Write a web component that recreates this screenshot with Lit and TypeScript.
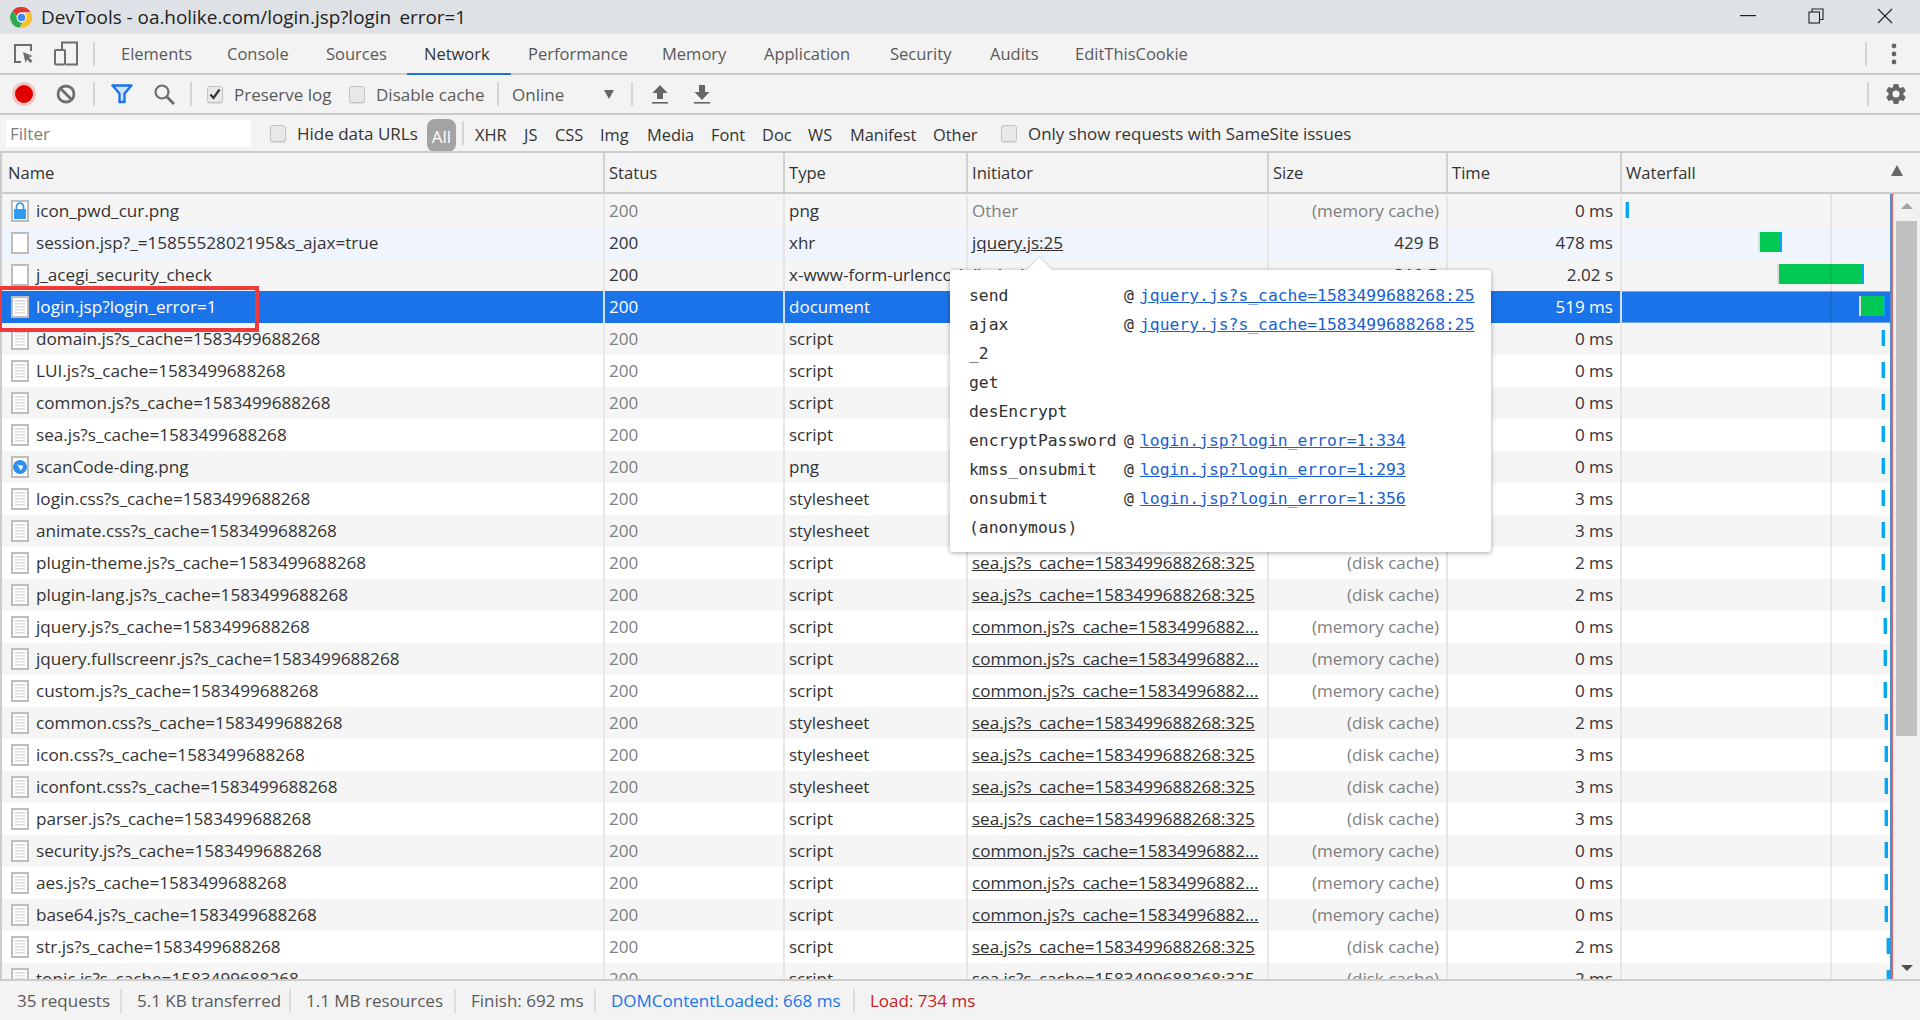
import { LitElement, html, css, svg } from "lit";
import { customElement } from "lit/decorators.js";

type Row = { n: string; i: string; t: string; ini: string; sz: string; tm: string; };
const S = "1583499688268";
const SEA = `sea.js?s_cache=${S}:325`;
const COM = "common.js?s_cache=15834996882...";
const D = "(disk cache)", M = "(memory cache)";
const rows: Row[] = [
  { n: "icon_pwd_cur.png", i: "lock", t: "png", ini: "Other", sz: M, tm: "0 ms" },
  { n: "session.jsp?_=1585552802195&s_ajax=true", i: "blank", t: "xhr", ini: "jquery.js:25", sz: "429 B", tm: "478 ms" },
  { n: "j_acegi_security_check", i: "blank", t: "x-www-form-urlencoded", ini: "(index)", sz: "310 B", tm: "2.02 s" },
  { n: "login.jsp?login_error=1", i: "doc", t: "document", ini: "login.jsp", sz: "3.2 KB", tm: "519 ms" },
  { n: `domain.js?s_cache=${S}`, i: "doc", t: "script", ini: "login.jsp", sz: M, tm: "0 ms" },
  { n: `LUI.js?s_cache=${S}`, i: "doc", t: "script", ini: "login.jsp", sz: M, tm: "0 ms" },
  { n: `common.js?s_cache=${S}`, i: "doc", t: "script", ini: "login.jsp", sz: M, tm: "0 ms" },
  { n: `sea.js?s_cache=${S}`, i: "doc", t: "script", ini: "login.jsp", sz: M, tm: "0 ms" },
  { n: "scanCode-ding.png", i: "ding", t: "png", ini: "login.jsp", sz: M, tm: "0 ms" },
  { n: `login.css?s_cache=${S}`, i: "doc", t: "stylesheet", ini: "login.jsp", sz: D, tm: "3 ms" },
  { n: `animate.css?s_cache=${S}`, i: "doc", t: "stylesheet", ini: "login.jsp", sz: D, tm: "3 ms" },
  { n: `plugin-theme.js?s_cache=${S}`, i: "doc", t: "script", ini: SEA, sz: D, tm: "2 ms" },
  { n: `plugin-lang.js?s_cache=${S}`, i: "doc", t: "script", ini: SEA, sz: D, tm: "2 ms" },
  { n: `jquery.js?s_cache=${S}`, i: "doc", t: "script", ini: COM, sz: M, tm: "0 ms" },
  { n: `jquery.fullscreenr.js?s_cache=${S}`, i: "doc", t: "script", ini: COM, sz: M, tm: "0 ms" },
  { n: `custom.js?s_cache=${S}`, i: "doc", t: "script", ini: COM, sz: M, tm: "0 ms" },
  { n: `common.css?s_cache=${S}`, i: "doc", t: "stylesheet", ini: SEA, sz: D, tm: "2 ms" },
  { n: `icon.css?s_cache=${S}`, i: "doc", t: "stylesheet", ini: SEA, sz: D, tm: "3 ms" },
  { n: `iconfont.css?s_cache=${S}`, i: "doc", t: "stylesheet", ini: SEA, sz: D, tm: "3 ms" },
  { n: `parser.js?s_cache=${S}`, i: "doc", t: "script", ini: SEA, sz: D, tm: "3 ms" },
  { n: `security.js?s_cache=${S}`, i: "doc", t: "script", ini: COM, sz: M, tm: "0 ms" },
  { n: `aes.js?s_cache=${S}`, i: "doc", t: "script", ini: COM, sz: M, tm: "0 ms" },
  { n: `base64.js?s_cache=${S}`, i: "doc", t: "script", ini: COM, sz: M, tm: "0 ms" },
  { n: `str.js?s_cache=${S}`, i: "doc", t: "script", ini: SEA, sz: D, tm: "2 ms" },
  { n: `topic.js?s_cache=${S}`, i: "doc", t: "script", ini: SEA, sz: D, tm: "2 ms" },
];

const tickX = (i: number) => {
  if (i === 0) return 4;
  if (i >= 4 && i <= 12) return 260;
  if (i >= 13 && i <= 15) return 262;
  if (i >= 16 && i <= 22) return 263;
  return 265;
};
const bars: Record<number, [number, number]> = { 1: [138, 20], 2: [157, 83], 3: [239, 22] };

const stack = [
  ["send", `jquery.js?s_cache=${S}:25`],
  ["ajax", `jquery.js?s_cache=${S}:25`],
  ["_2", ""], ["get", ""], ["desEncrypt", ""],
  ["encryptPassword", "login.jsp?login_error=1:334"],
  ["kmss_onsubmit", "login.jsp?login_error=1:293"],
  ["onsubmit", "login.jsp?login_error=1:356"],
  ["(anonymous)", ""],
];

const tabs = ["Elements", "Console", "Sources", "Network", "Performance", "Memory", "Application", "Security", "Audits", "EditThisCookie"];
const types = ["XHR", "JS", "CSS", "Img", "Media", "Font", "Doc", "WS", "Manifest", "Other"];

const fileIcon = (k: string) => svg`<svg class="ficon" width="18" height="22" viewBox="0 0 18 22">
  <rect x="1" y="1" width="16" height="20" fill="#fff" stroke="#bdbdbd" stroke-width="2"/>
  ${k === "doc" ? svg`<g fill="#dcdcdc"><rect x="4" y="4" width="10" height="1.6"/><rect x="4" y="7" width="6" height="1.6"/><rect x="11" y="7" width="3" height="1.6"/><rect x="4" y="10" width="10" height="1.6"/><rect x="4" y="13" width="4" height="1.6"/><rect x="9" y="13" width="5" height="1.6"/><rect x="4" y="16" width="10" height="1.6"/></g>` : ""}
  ${k === "lock" ? svg`<path d="M5.5 9V6.6a3.5 3.5 0 0 1 7 0V9" fill="none" stroke="#2f9bf0" stroke-width="1.7"/><rect x="3" y="9" width="12" height="10" rx="1" fill="#2f9bf0"/>` : ""}
  ${k === "ding" ? svg`<circle cx="9" cy="11" r="7" fill="#2b8ff0"/><path d="M5.5 8.5l7 1.5-1.5 2 .8 0-3 3 .7-2.5-2-.5.6-1.3z" fill="#fff"/>` : ""}
</svg>`;

@customElement("app-root")
export class AppRoot extends LitElement {
  static styles = css`
    :host { display: flex; flex-direction: column; position: relative; width: 1920px; height: 1020px; overflow: hidden; background: #f3f3f3; font-family: "Open Sans", "Noto Sans", sans-serif; font-size: 17px; color: #333; }
    svg { display: block; }
    .title { height: 34px; background: #dee1e6; display: flex; align-items: center; padding-left: 10px; flex: none; position: relative; }
    .title .t { margin-left: 8px; font-size: 18.9px; color: #222; white-space: nowrap; }
    .hid { color: transparent; }
    .winbtns { margin-left: auto; display: grid; grid-template-columns: 16px 68px 69px; align-items: center; padding: 0 27px 3px 0; justify-items: end; }
    .tabs { height: 39px; flex: none; border-bottom: 2px solid #ccc; display: grid; grid-template-columns: 48px 36px 20px 106px 99px 98px 104px 134px 102px 126px 100px 85px 140px 1fr 20px 36px 8px; align-items: center; box-sizing: content-box; }
    .tab { height: 39px; line-height: 40px; padding-left: 17px; color: #5a5a5a; white-space: nowrap; position: relative; box-sizing: border-box; font-size: 16.5px; }
    .tab.on { color: #333; }
    .tab.on::after { content: ""; position: absolute; left: 0; right: 0; bottom: -2px; height: 2px; background: #1a73e8; }
    .ic { justify-self: center; }
    .sep { width: 2px; height: 24px; background: #d4d4d4; justify-self: center; }
    .tools { height: 38px; flex: none; border-bottom: 2px solid #ccc; display: grid; grid-template-columns: 48px 36px 20px 36px 48px 6px 142px 156px 12px 118px 20px 36px 6px 36px 1fr 20px 36px 6px; align-items: center; }
    .chk { display: flex; align-items: center; padding-left: 13px; color: #5a5a5a; white-space: nowrap; }
    .box { width: 16px; height: 17px; box-sizing: border-box; border: 1px solid #c2c2c2; border-radius: 3px; background: #e8e8e8; margin-right: 11px; flex: none; display: flex; align-items: center; justify-content: center; box-shadow: 0 1px 1px #ddd; }
    .sel { display: flex; align-items: center; justify-content: space-between; padding: 0 8px; color: #5a5a5a; }
    .caret { width: 0; height: 0; border-left: 5px solid transparent; border-right: 5px solid transparent; border-top: 9px solid #666; }
    .filters { height: 36px; flex: none; display: grid; grid-template-columns: 6px 245px 176px 29px 14px 49px 31px 45px 47px 64px 51px 46px 42px 83px 68px 1fr; align-items: center; }
    .input { grid-column: 2; height: 27px; background: #fff; color: #808080; padding-left: 4px; line-height: 28px; box-sizing: border-box; }
    .filters .chk { padding-left: 19px; color: #333; }
    .filters .only { padding-left: 5px; font-size: 16.9px; }
    .all { height: 33px; border-radius: 8px; background: #a3a3a3; color: #fff; text-align: center; line-height: 35px; align-self: end; margin-bottom: -1px; }
    .ty { padding-left: 5px; padding-top: 3px; color: #333; font-size: 16.4px; }
    .table { flex: 1; display: flex; flex-direction: column; min-height: 0; border-top: 2px solid #ccc; border-left: 2px solid #ccc; }
    .head, .row { display: grid; grid-template-columns: 601px 180px 183px 301px 179px 174px 273px; }
    .head { height: 39px; border-bottom: 2px solid #ccc; flex: none; position: relative; font-size: 16.6px; }
    .head .c { border-left: 2px solid #d0d0d0; padding-left: 4px; line-height: 39px; }
    .head .c:first-child { border-left: 0; padding-left: 6px; }
    .sort { position: absolute; left: 1889px; top: 12px; width: 0; height: 0; border-left: 6px solid transparent; border-right: 6px solid transparent; border-bottom: 11px solid #666; }
    .body { flex: 1; min-height: 0; display: flex; position: relative; overflow: hidden; padding-top: 1px; }
    .list { width: 1891px; flex: none; }
    .row { height: 32px; background: #fff; line-height: 31px; white-space: nowrap; font-size: 17.05px; }
    .row.odd { background: #f5f5f5; }
    .row.hov { background: #f0f5fd; }
    .row .c { border-left: 2px solid #e6e6e6; padding-left: 4px; overflow: hidden; box-sizing: border-box; }
    .row .c:first-child { border-left: 0; padding-left: 9px; display: flex; align-items: center; font-size: 17.15px; }
    .name { margin-top: -2px; }
    .ficon { margin-right: 7px; flex: none; }
    .dim { color: #808080; }
    .link { text-decoration: underline; color: #303030; }
    .r { text-align: right; padding-right: 7px; }
    .row.sel2 { background: #1a73e8; color: #fff; }
    .row.sel2 .c { border-left-color: #cfe0f8; }
    .row.sel2 .c:first-child { color: #fff; }
    .row.sel2 .dim { color: #fff; }
    .row.sel2 .wf { box-shadow: inset 0 1px 0 #6ea6f0, inset 0 -1px 0 #6ea6f0; }
    .wf { position: relative; }
    .tick { position: absolute; top: 7px; width: 3px; height: 16px; background: #03a9f4; box-shadow: -1px 0 0 #8fd8fa; }
    .bar { position: absolute; top: 5px; height: 20px; background: #00c853; box-shadow: 2px 0 0 #03a9f4, -2px 0 0 #ddd; }
    .grid-line { position: absolute; top: 0; bottom: 0; left: 1828px; width: 2px; background: rgba(0, 0, 0, 0.07); }
    .dom-line { position: absolute; top: 0; bottom: 0; left: 1888px; width: 2px; background: #4a90d9; }
    .load-line { position: absolute; top: 0; bottom: 0; left: 1890px; width: 1.5px; background: #e06666; }
    .scroll { width: 27px; flex: none; background: #f1f1f1; position: relative; }
    .up { position: absolute; left: 8px; top: 8px; width: 0; height: 0; border-left: 6px solid transparent; border-right: 6px solid transparent; border-bottom: 6px solid #a3a3a3; }
    .thumb { position: absolute; left: 3px; top: 26px; width: 21px; height: 515px; background: #c1c1c1; }
    .down { position: absolute; right: 7px; bottom: 8px; width: 0; height: 0; border-left: 6px solid transparent; border-right: 6px solid transparent; border-top: 6px solid #505050; }
    .foot { height: 39px; flex: none; border-top: 2px solid #ccc; display: grid; grid-template-columns: 122px 169px 165px 140px 259px 1fr; align-items: center; color: #5a5a5a; }
    .foot div { padding-left: 15px; height: 24px; line-height: 24px; border-right: 2px solid #ddd; white-space: nowrap; }
    .foot div:first-child { padding-left: 17px; }
    .foot div:last-child { border-right: 0; }
    .foot .blue { color: #1a73e8; }
    .foot .red { color: #c5221f; }
    .pop { position: absolute; left: 950px; top: 270px; width: 541px; height: 282px; box-sizing: border-box; background: #fff; border-radius: 3px; box-shadow: 0 1px 5px rgba(0, 0, 0, 0.35); padding: 11px 0 0 19px; display: grid; grid-template-columns: 155px 16px 1fr; grid-auto-rows: 29px; align-items: center; font-family: "DejaVu Sans Mono", "Liberation Mono", monospace; font-size: 16.35px; color: #303030; }
    .pop::before { content: ""; position: absolute; left: 81px; top: -9px; width: 17px; height: 17px; background: #fff; transform: rotate(45deg); box-shadow: -1px -1px 2px rgba(0, 0, 0, 0.12); }
    .pop span { position: relative; white-space: nowrap; }
    .pop a { color: #1a5fd0; text-decoration: underline; }
    .mark { position: absolute; left: 0; top: 286px; width: 259px; height: 46px; box-sizing: border-box; border: 4px solid #f33a3a; border-left-width: 2px; pointer-events: none; }
  `;

  render() {
    return html`
      <div class="title">
        <svg width="23" height="23" viewBox="0 0 24 24">
          <path d="M12 1a11 11 0 0 1 9.6 5.6H12a5.4 5.4 0 0 0-5.2 4L3 4.6A11 11 0 0 1 12 1z" fill="#e0392b"/>
          <path d="M3 4.6l4 6.9a5.4 5.4 0 0 0 6.6 5.8L9.800 22.800A11 11 0 0 1 3 4.600z" fill="#2fa84f"/>
          <path d="M21.600 6.600A11 11 0 0 1 10 22.800l4.200-6.800A5.400 5.400 0 0 0 15.800 8z" fill="#fbc02d"/>
          <circle cx="12" cy="12" r="5" fill="#fff"/><circle cx="12" cy="12" r="4" fill="#4285f4"/>
        </svg>
        <span class="t">DevTools - oa.holike.com/login.jsp?login<span class="hid">_</span>error=1</span>
        <div class="winbtns">
          <svg width="16" height="2" viewBox="0 0 16 2"><rect width="16" height="1.2" fill="#222"/></svg>
          <svg width="16" height="16" viewBox="0 0 16 16" fill="none" stroke="#222" stroke-width="1.1"><rect x="1" y="4" width="10.500" height="11"/><path d="M4 4V1h11v10.500h-3.500"/></svg>
          <svg width="16" height="16" viewBox="0 0 16 16" stroke="#222" stroke-width="1.1"><path d="M1 1l14 14M15 1L1 15"/></svg>
        </div>
      </div>
      <div class="tabs">
        <svg class="ic" width="22" height="22" viewBox="0 0 22 22" fill="none" stroke="#6e6e6e" stroke-width="2"><path d="M8 19H2V2h16v6"/><path d="M10 9l9.500 4-3.500 1.500 3.500 3.500-2 2-3.500-3.500-1.500 3.500z" fill="#6e6e6e" stroke="none"/></svg>
        <svg class="ic" width="24" height="25" viewBox="0 0 24 25" fill="none" stroke="#6e6e6e" stroke-width="2"><path d="M8 8V1.500h15v22H12"/><rect x="1" y="9" width="10" height="14.500" rx="1"/></svg>
        <div class="sep"></div>
        ${tabs.map((t) => html`<div class="tab ${t === "Network" ? "on" : ""}">${t}</div>`)}
        <div></div>
        <div class="sep"></div>
        <svg class="ic" width="6" height="24" viewBox="0 0 6 24" fill="#666"><circle cx="3" cy="4" r="2.400"/><circle cx="3" cy="12" r="2.400"/><circle cx="3" cy="20" r="2.400"/></svg>
        <div></div>
      </div>
      <div class="tools">
        <svg class="ic" width="26" height="26" viewBox="0 0 26 26"><circle cx="13" cy="13" r="12" fill="#f5c6c6"/><circle cx="13" cy="13" r="9" fill="#e00000"/></svg>
        <svg class="ic" width="20" height="20" viewBox="0 0 20 20" fill="none" stroke="#6e6e6e" stroke-width="2.800"><circle cx="10" cy="10" r="8"/><path d="M4.500 4.500l11 11"/></svg>
        <div class="sep"></div>
        <svg class="ic" width="22" height="20" viewBox="0 0 22 20"><path d="M1.500 1.500h19l-7 8v8.500h-5V9.500z" fill="#cfe3fb" stroke="#1a73e8" stroke-width="2.400" stroke-linejoin="round"/></svg>
        <svg class="ic" width="21" height="21" viewBox="0 0 21 21" fill="none" stroke="#6e6e6e" stroke-width="2.200"><circle cx="8" cy="8" r="6.500"/><path d="M12.800 12.800L20 20" stroke-width="2.800"/></svg>
        <div class="sep"></div>
        <div class="chk"><span class="box"><svg width="12" height="12" viewBox="0 0 12 12" fill="none" stroke="#333" stroke-width="2.200"><path d="M1.500 6.500l3 3.500 6-8.500"/></svg></span>Preserve log</div>
        <div class="chk"><span class="box"></span>Disable cache</div>
        <div class="sep"></div>
        <div class="sel"><span>Online</span><span class="caret"></span></div>
        <div class="sep"></div>
        <svg class="ic" width="16" height="19" viewBox="0 0 16 19" fill="#666"><path d="M8 0l7.500 8H11v6H5V8H.5z"/><rect y="17" width="16" height="1.600"/></svg>
        <div></div>
        <svg class="ic" width="16" height="19" viewBox="0 0 16 19" fill="#666"><path d="M8 15L.5 7H5V0h6v7h4.500z"/><rect y="17" width="16" height="1.600"/></svg>
        <div></div>
        <div class="sep"></div>
        <svg class="ic" width="24" height="24" viewBox="0 0 24 24" fill="#666"><path d="M19.430 12.980c.04-.32.070-.64.070-.98s-.03-.66-.07-.98l2.110-1.650a.5.5 0 0 0 .12-.64l-2-3.460a.5.5 0 0 0-.61-.22l-2.490 1a7.300 7.300 0 0 0-1.690-.98l-.38-2.650A.49.49 0 0 0 14 2h-4a.49.49 0 0 0-.49.420l-.38 2.650c-.61.250-1.170.590-1.690.980l-2.490-1a.49.49 0 0 0-.61.220l-2 3.460a.49.49 0 0 0 .12.640l2.110 1.650c-.04.320-.07.650-.07.980s.03.660.07.980l-2.110 1.650a.5.5 0 0 0-.12.640l2 3.460c.12.220.39.300.61.220l2.490-1c.52.400 1.080.730 1.690.980l.38 2.650c.03.240.24.420.49.420h4c.25 0 .46-.18.490-.42l.38-2.650c.61-.25 1.170-.59 1.690-.98l2.490 1c.23.090.49 0 .61-.22l2-3.460a.5.5 0 0 0-.12-.64zM12 15.500a3.500 3.500 0 1 1 0-7 3.500 3.500 0 0 1 0 7z"/></svg>
        <div></div>
      </div>
      <div class="filters">
        <div class="input">Filter</div>
        <div class="chk"><span class="box"></span>Hide data URLs</div>
        <div class="all">All</div>
        <div class="sep"></div>
        ${types.map((t) => html`<div class="ty">${t}</div>`)}
        <div class="chk only"><span class="box"></span>Only show requests with SameSite issues</div>
      </div>
      <div class="table">
        <div class="head">
          ${["Name", "Status", "Type", "Initiator", "Size", "Time", "Waterfall"].map((h) => html`<div class="c">${h}</div>`)}
          <span class="sort"></span>
        </div>
        <div class="body">
          <div class="list">
            ${rows.map((r, i) => this.renderRow(r, i))}
          </div>
          <div class="grid-line"></div>
          <div class="dom-line"></div>
          <div class="load-line"></div>
          <div class="scroll"><span class="up"></span><span class="thumb"></span><span class="down"></span></div>
        </div>
      </div>
      <div class="foot">
        <div>35 requests</div>
        <div>5.1 KB transferred</div>
        <div>1.1 MB resources</div>
        <div>Finish: 692 ms</div>
        <div class="blue">DOMContentLoaded: 668 ms</div>
        <div class="red">Load: 734 ms</div>
      </div>
      <div class="mark"></div>
      <div class="pop">
        ${stack.map(([f, l]) => html`<span>${f}</span><span>${l ? "@" : ""}</span><span>${l ? html`<a>${l}</a>` : ""}</span>`)}
      </div>
    `;
  }

  renderRow(r: Row, i: number) {
    const cached = r.sz === D || r.sz === M;
    const cls = ["row", i % 2 === 0 ? "odd" : "", i === 1 ? "hov" : "", i === 3 ? "sel2" : ""].join(" ");
    const bar = bars[i];
    return html`<div class=${cls}>
      <div class="c">${fileIcon(r.i)}<span class="name">${r.n}</span></div>
      <div class="c ${cached ? "dim" : ""}">200</div>
      <div class="c">${r.t}</div>
      <div class="c">${r.ini === "Other" ? html`<span class="dim">Other</span>` : html`<span class="link">${r.ini}</span>`}</div>
      <div class="c r ${cached ? "dim" : ""}">${r.sz}</div>
      <div class="c r">${r.tm}</div>
      <div class="c wf">
        ${bar
          ? html`<span class="bar" style="left:${bar[0]}px;width:${bar[1]}px"></span>`
          : html`<span class="tick" style="left:${tickX(i)}px"></span>`}
      </div>
    </div>`;
  }
}
